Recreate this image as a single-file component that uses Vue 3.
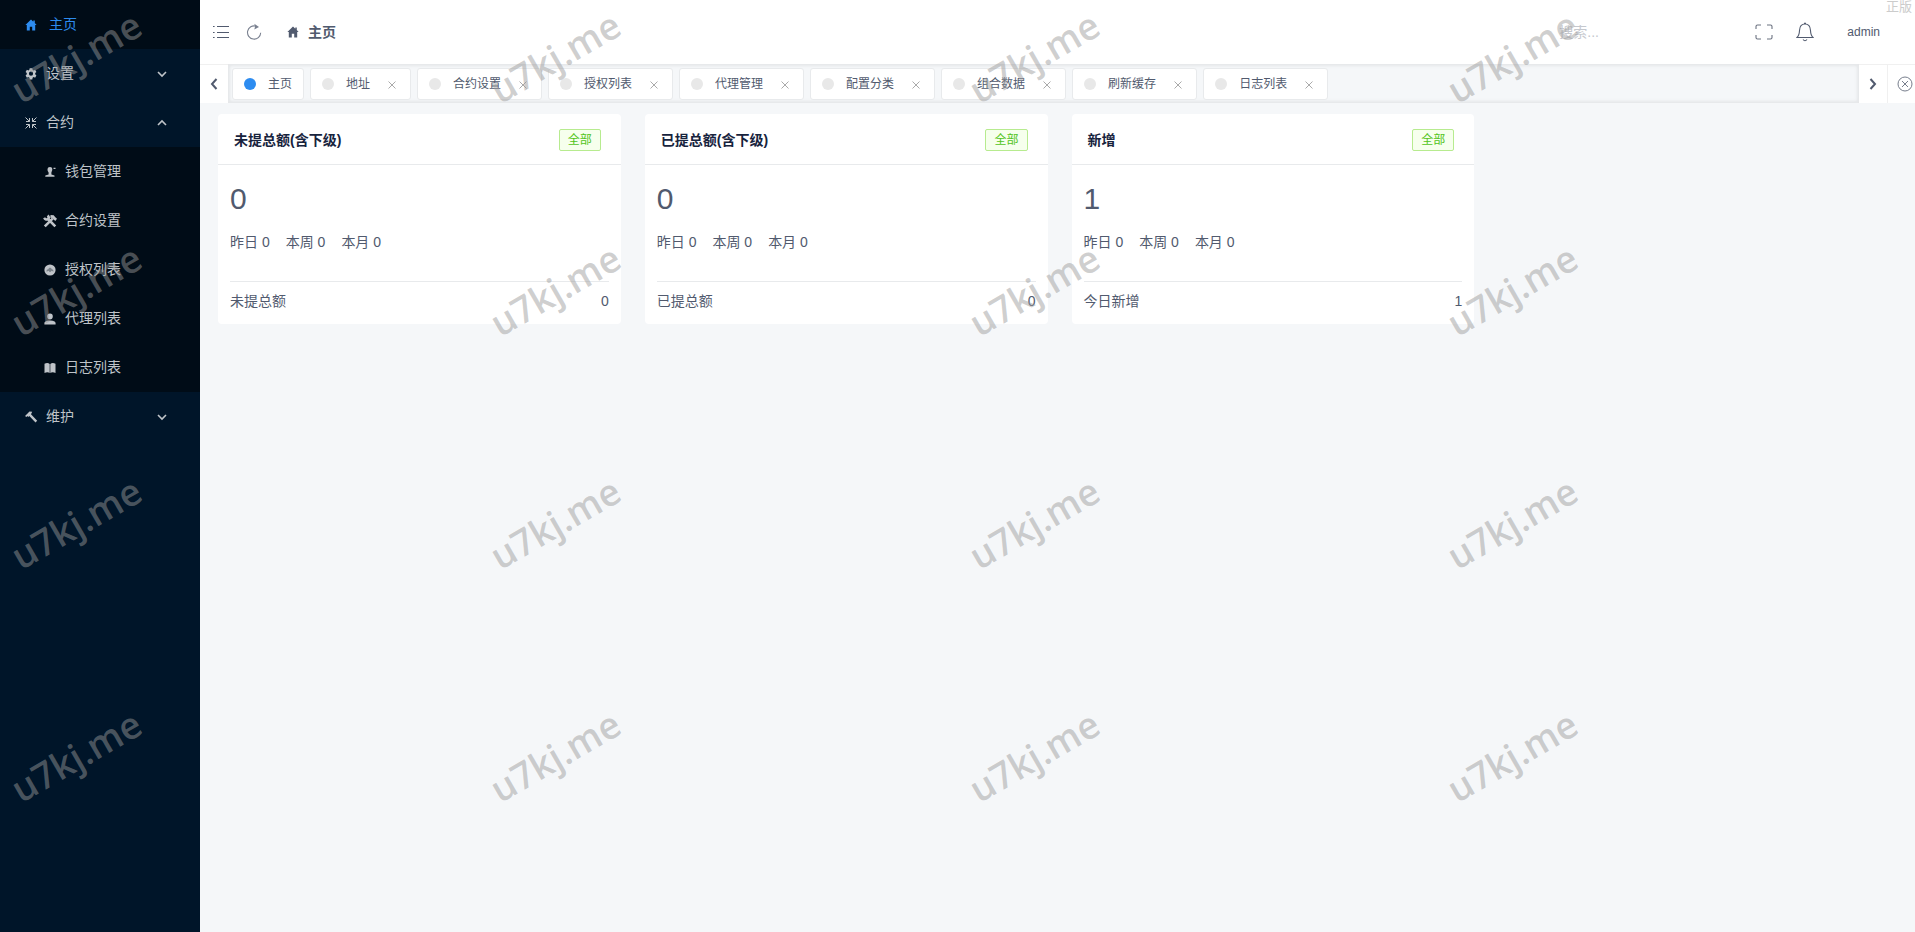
<script setup>
import { ref } from 'vue'

const search = ref('')
const children = [
  { icon: 'wallet', label: '钱包管理' },
  { icon: 'tools', label: '合约设置' },
  { icon: 'auth', label: '授权列表' },
  { icon: 'person', label: '代理列表' },
  { icon: 'book', label: '日志列表' }
]
const tabs = ['地址', '合约设置', '授权列表', '代理管理', '配置分类', '组合数据', '刷新缓存', '日志列表']
const cards = [
  { title: '未提总额(含下级)', value: 0, foot: '未提总额', total: 0 },
  { title: '已提总额(含下级)', value: 0, foot: '已提总额', total: 0 },
  { title: '新增', value: 1, foot: '今日新增', total: 1 }
]
const periods = ['昨日', '本周', '本月']
</script>

<template>
  <div class="layout">
    <aside class="sider">
      <nav>
        <a href="#" class="item home">
          <svg class="ico" viewBox="0 0 14 14"><path d="M7 1.6 1.4 7h1.4v5.4h3V8.8h2.4v3.6h3V7h1.4L10.8 5.1V2.5H9.3v1.3z" fill="currentColor" /></svg>
          <span>主页</span>
        </a>
        <a href="#" class="item">
          <svg class="ico" viewBox="0 0 14 14"><path fill-rule="evenodd" d="M5.7 1.2h2.6l.3 1.6 1 .6 1.5-.6 1.3 2.3-1.2 1v1.2l1.2 1.1-1.3 2.3-1.5-.6-1 .6-.3 1.7H5.7l-.3-1.7-1-.6-1.5.6-1.3-2.3 1.2-1.1V6.1l-1.2-1 1.3-2.3 1.5.6 1-.6zM7 4.6a2.1 2.1 0 1 0 0 4.2 2.1 2.1 0 0 0 0-4.2z" fill="currentColor" /></svg>
          <span>设置</span>
          <svg class="arrow" viewBox="0 0 10 10"><path d="M1 3l4 4 4-4" fill="none" stroke="currentColor" stroke-width="1.6" /></svg>
        </a>
        <a href="#" class="item">
          <svg class="ico" viewBox="0 0 14 14"><path d="M1.5 1.5l4 4M2 5.5h3.5V2M12.500 1.500l-4 4M12 5.500H8.500V2M1.500 12.500l4-4M2 8.500h3.500V12M12.500 12.500l-4-4M12 8.500H8.500V12" fill="none" stroke="currentColor" /></svg>
          <span>合约</span>
          <svg class="arrow" viewBox="0 0 10 10"><path d="M1 7l4-4 4 4" fill="none" stroke="currentColor" stroke-width="1.6" /></svg>
        </a>
        <div class="sub">
          <a v-for="c in children" :key="c.label" href="#" class="item child">
            <svg class="ico" viewBox="0 0 14 14" fill="currentColor">
              <path v-if="c.icon === 'wallet'" d="M4.500 4.500C4.500 2.800 5.600 2 7 2s2.300.900 2.300 2.300c0 1.500-.600 2.200-.900 3.100v2l3.100 1v1.300H2.300v-1.300l3.300-1v-2c-.500-.800-1.100-1.500-1.100-2.900zM10.500 2.800h2v1.100h-2z" />
              <g v-else-if="c.icon === 'tools'" fill="none" stroke="currentColor" stroke-width="2.600">
                <path d="M4 4l8.300 8.300M1.800 12.300 9.800 4.300" />
                <path d="M1.200 3.700q1.200 2.600 3.600 1.400T4.600 1.500" stroke-width="2.400" />
                <path d="M7.400 2.300 10 2.600l1.400 1.700 1.800 1.500" stroke-width="2.800" />
              </g>
              <g v-else-if="c.icon === 'auth'"><circle cx="7" cy="7" r="5.600" /><path d="M3.600 8.800c-.400-1.900.800-2.700 1.700-2.500.300-2.200 3.200-2.200 3.500 0 1.200-.100 1.900 1 1.600 2.500L8.800 7.700 7 9.200 5.500 7.700z" fill="#7a8289" /></g>
              <path v-else-if="c.icon === 'person'" d="M7 1.500a2.800 2.800 0 0 1 2.800 2.900C9.800 6.200 8.600 7.500 7 7.500S4.200 6.200 4.200 4.400A2.800 2.800 0 0 1 7 1.500zM1.400 12.500v-1.300C1.400 9.400 4.200 8.600 7 8.600s5.600.8 5.600 2.600v1.300z" />
              <path v-else d="M1.500 2.800c2-1 4-.900 5.200.300v9c-1.200-.900-3.200-1-5.200-.100zM7.300 3.100c1.200-1.200 3.200-1.300 5.200-.300V12c-2-.900-4-.800-5.200.100z" />
            </svg>
            <span>{{ c.label }}</span>
          </a>
        </div>
        <a href="#" class="item">
          <svg class="ico" viewBox="0 0 14 14"><path d="M1 6 5.500 1.500l2.700.3-1.200 2.400 6.200 6.600-1.700 1.700-6.200-6.600-1.100 1-.8-.8-1 1z" fill="currentColor" /></svg>
          <span>维护</span>
          <svg class="arrow" viewBox="0 0 10 10"><path d="M1 3l4 4 4-4" fill="none" stroke="currentColor" stroke-width="1.6" /></svg>
        </a>
      </nav>
    </aside>

    <div class="main">
      <header class="header">
        <button class="plain" aria-label="菜单">
          <svg width="16" height="16" viewBox="0 0 16 16"><path d="M4 2.500h12M4 8.500h12M4 13.500h12M0 2.500h1.600M0 8.500h1.600M0 13.500h1.600" fill="none" stroke="#515a6e" stroke-width="1.100" /></svg>
        </button>
        <button class="plain reload" aria-label="刷新">
          <svg width="16" height="18" viewBox="0 0 16 18"><path d="M10 3.200a6.600 6.600 0 1 0 4.700 6.600" fill="none" stroke="#7a8190" stroke-width="1.100" /><path d="M8.300.8 13 4 8.300 6.500l.8-3z" fill="#7a8190" /></svg>
        </button>
        <a href="#" class="crumb">
          <svg width="14" height="14" viewBox="0 0 14 14"><path d="M7 1.600 1.400 7h1.400v5.400h3V8.800h2.400v3.600h3V7h1.400L10.800 5.100V2.500H9.300v1.300z" fill="currentColor" /></svg>
          <span>主页</span>
        </a>
        <div class="tools">
          <input v-model="search" class="search" type="text" placeholder="搜索..." aria-label="搜索" />
          <button class="plain full" aria-label="全屏">
            <svg width="18" height="18" viewBox="0 0 18 18"><path d="M1 6V3.500Q1 2 2.500 2H6M12 2h3.500Q17 2 17 3.500V6M17 12v2.500q0 1.500-1.500 1.500H12M6 16H2.500Q1 16 1 14.500V12" fill="none" stroke="#6b7280" stroke-width="1.100" /></svg>
          </button>
          <button class="plain bell" aria-label="通知">
            <svg width="18" height="20" viewBox="0 0 18 20"><path d="M1 15.500c2-1.800 2.300-3 2.500-7C3.700 4.500 6 2 9 2s5.300 2.500 5.500 6.500c.2 4 .5 5.200 2.500 7zM7 17.500q2 2.500 4 0M8 1.200h2" fill="none" stroke="#515a6e" stroke-width="1.100" /></svg>
          </button>
          <a href="#" class="user">admin</a>
        </div>
        <span class="license">正版</span>
      </header>

      <div class="tabbar">
        <button class="nav" aria-label="向左"><svg width="10" height="14" viewBox="0 0 10 14"><path d="M7.500 2 3 7l4.500 5" fill="none" stroke="#515a6e" stroke-width="2" /></svg></button>
        <div class="tabs">
          <div class="tab"><i class="dot on"></i><a href="#">主页</a></div>
          <div v-for="t in tabs" :key="t" class="tab">
            <i class="dot"></i><a href="#">{{ t }}</a>
            <button class="x" aria-label="关闭"><svg width="8" height="8" viewBox="0 0 8 8"><path d="M.500.500l7 7M7.500.500l-7 7" stroke="#aaa" fill="none" /></svg></button>
          </div>
        </div>
        <button class="nav" aria-label="向右"><svg width="10" height="14" viewBox="0 0 10 14"><path d="M2.500 2 7 7l-4.500 5" fill="none" stroke="#515a6e" stroke-width="2" /></svg></button>
        <button class="nav all" aria-label="关闭全部"><svg width="16" height="16" viewBox="0 0 16 16"><path d="M5 5l6 6M11 5l-6 6" stroke="#777e8c" /><circle cx="8" cy="8" r="7" fill="none" stroke="#777e8c" /></svg></button>
      </div>

      <main class="content">
        <section v-for="c in cards" :key="c.title" class="card">
          <div class="head"><h2>{{ c.title }}</h2><span class="tag">全部</span></div>
          <div class="body">
            <div class="value">{{ c.value }}</div>
            <div class="stats"><span v-for="p in periods" :key="p">{{ p }} 0</span></div>
            <div class="foot"><span>{{ c.foot }}</span><span>{{ c.total }}</span></div>
          </div>
        </section>
      </main>
    </div>

    <div class="marks" aria-hidden="true">
      <div v-for="n in 16" :key="n" class="cell"><span>u7kj.me</span></div>
    </div>
  </div>
</template>

<style>
body { margin: 0; }
</style>

<style scoped>
.layout {
  position: relative;
  display: flex;
  min-height: 100vh;
  background: #f5f7f9;
  color: #515a6e;
  font: 14px/22px "Liberation Sans", "Noto Sans CJK SC", sans-serif;
}
* { box-sizing: border-box; }
a { color: inherit; text-decoration: none; }
button { padding: 0; border: 0; background: none; font: inherit; cursor: pointer; }
svg { display: block; flex: none; }

.sider { flex: none; width: 200px; background: #001529; color: #bfc4c9; }
.item { display: flex; align-items: center; gap: 8px; height: 49px; padding: 0 33px 0 24px; }
.item span { padding-bottom: 2px; }
.item.home { gap: 11px; background: #000c17; color: #2d8cf0; }
.sub { background: #000c17; }
.item.child { padding-left: 43px; }
.ico { width: 14px; height: 14px; }
.arrow { width: 10px; height: 10px; margin-left: auto; }

.main { flex: 1; min-width: 0; }
.header { position: relative; display: flex; align-items: center; height: 64px; padding: 0 35px 0 13px; background: #fff; }
.reload { margin-left: 17px; }
.crumb { display: flex; align-items: center; gap: 8px; margin-left: 24px; font-weight: 700; }
.tools { display: flex; align-items: center; margin-left: auto; }
.search { width: 196px; padding: 0; border: 0; outline: 0; background: none; color: #515a6e; font: inherit; }
.search::placeholder { color: #c5c8ce; opacity: 1; }
.bell { margin-left: 23px; }
.user { margin-left: 33px; font-size: 12px; }
.license { position: absolute; top: 0; right: 3px; color: #ccc; font-size: 13px; line-height: 14px; }

.tabbar { display: flex; height: 39px; background: #fff; }
.nav { display: flex; flex: none; align-items: center; justify-content: center; width: 28px; border-top: 1px solid #f0f0f0; }
.all { justify-content: flex-start; padding-left: 9px; border-left: 1px solid #f0f0f0; }
.tabs {
  display: flex;
  flex: 1;
  align-items: center;
  gap: 6px;
  min-width: 0;
  padding: 1px 4px 0;
  overflow: hidden;
  background: #f5f7f9;
  box-shadow: inset 0 0 3px 2px rgba(100, 100, 100, .1);
}
.tab {
  display: flex;
  flex: none;
  align-items: center;
  height: 32px;
  padding: 0 11px;
  border: 1px solid #e8eaec;
  border-radius: 3px;
  background: #fff;
  font-size: 12px;
}
.dot { width: 12px; height: 12px; margin-right: 12px; border-radius: 50%; background: #e8e8e8; }
.dot.on { background: #2d8cf0; }
.x { display: flex; align-items: center; margin: 2px 3px 0 18px; }

.content { display: grid; grid-template-columns: repeat(4, 1fr); gap: 24px; padding: 11px 14px 11px 18px; }
.card { border-radius: 4px; background: #fff; }
.head { display: flex; align-items: center; justify-content: space-between; padding: 15px 20px 13px 16px; border-bottom: 1px solid #e8eaec; }
h2 { margin: 0; color: #17233d; font-size: 14px; line-height: 22px; }
.tag { padding: 0 8px; border: 1px solid #b7eb8f; border-radius: 2px; background: #f6ffed; color: #52c41a; font-size: 12px; line-height: 20px; }
.body { padding: 12px; }
.value { font-size: 30px; line-height: 44px; }
.stats { display: flex; gap: 16px; margin: 10px 0 28px; }
.foot { display: flex; justify-content: space-between; padding-top: 8px; border-top: 1px solid #e8eaec; }

.marks { position: absolute; inset: 0; display: grid; grid-template: repeat(4, 1fr) / repeat(4, 1fr); pointer-events: none; }
.cell { display: flex; align-items: flex-start; padding-top: 32px; }
.cell span {
  width: 152px;
  transform: rotate(-30deg);
  color: rgba(154, 154, 154, .48);
  font: 600 37px/50px "Open Sans", "Noto Sans", sans-serif;
  text-align: center;
}
</style>
